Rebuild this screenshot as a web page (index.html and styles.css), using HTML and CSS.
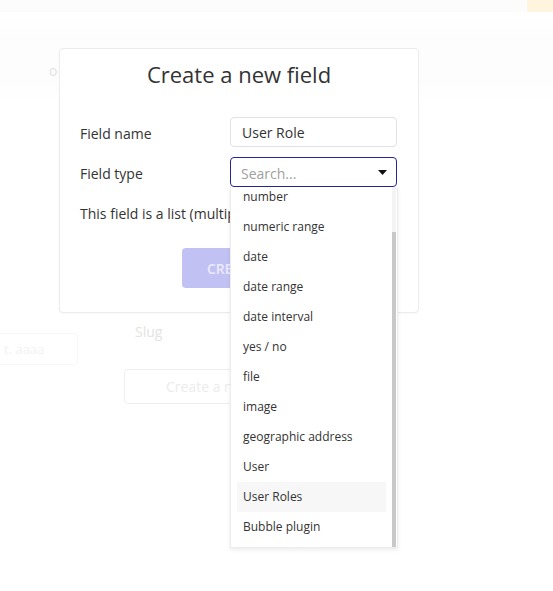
FILE: index.html
```html
<!DOCTYPE html>
<html>
<head>
<meta charset="utf-8">
<link rel="stylesheet" href="styles.css">
</head>
<body>
<div class="page">
  <div class="topbar"><span class="chip"></span></div>
  <div class="bg-head"><span class="bg-o">o</span></div>
  <div class="bg-body">
    <div class="bg-left">
      <div class="bg-box">t. aaaa</div>
    </div>
    <div class="bg-main">
      <div class="bg-slug">Slug</div>
      <div class="bg-btn">Create a new field</div>
    </div>
  </div>
</div>

<div class="modal">
  <h1 class="title">Create a new field</h1>
  <div class="form">
    <label class="lbl">Field name</label>
    <div class="input">User Role</div>
    <label class="lbl">Field type</label>
    <div class="select">
      <span class="placeholder">Search...</span>
      <svg class="caret" width="9" height="5" viewBox="0 0 9 5"><path d="M0 0h9L4.5 5z" fill="#111"/></svg>
    </div>
    <label class="lbl list-lbl">This field is a list (multiple entries)</label>
    <div class="check"></div>
  </div>
  <div class="actions"><button class="create">CREATE</button></div>
</div>

<div class="dropdown">
  <ul class="options">
    <li>number</li>
    <li>numeric range</li>
    <li>date</li>
    <li>date range</li>
    <li>date interval</li>
    <li>yes / no</li>
    <li>file</li>
    <li>image</li>
    <li>geographic address</li>
    <li>User</li>
    <li class="hover">User Roles</li>
    <li>Bubble plugin</li>
  </ul>
  <div class="scroll"><div class="thumb"></div></div>
</div>
</body>
</html>
```
FILE: styles.css
```css
* { box-sizing: border-box; }
html, body { margin: 0; padding: 0; background: #fff; }
body {
  font-family: "Open Sans", "Liberation Sans", sans-serif;
  color: #333;
  width: 553px;
  height: 591px;
  overflow: hidden;
  position: relative;
}

/* faded page behind the modal */
.page { width: 553px; height: 591px; }
.topbar {
  height: 12px;
  background: #fcfcfc;
  display: flex;
  justify-content: flex-end;
}
.chip { width: 26px; height: 12px; background: #fff5df; }
.bg-head {
  height: 88px;
  padding: 47px 0 0 49px;
  background: linear-gradient(#fff, #fdfdfd 30%, #fdfdfd 80%, #fff);
}
.bg-o { font-size: 14px; color: #e4e4e4; }
.bg-body { display: flex; padding-top: 222px; }
.bg-left { width: 124px; padding-top: 11px; }
.bg-box {
  width: 78px;
  height: 32px;
  border: 1px solid #f7f7f7;
  border-left: 0;
  border-radius: 0 4px 4px 0;
  font-size: 13px;
  color: #f2f2f2;
  padding: 6px 0 0 4px;
  white-space: nowrap;
  overflow: hidden;
}
.bg-slug { font-size: 14px; color: #e3e3e3; padding-left: 11px; line-height: 20px; }
.bg-btn {
  margin-top: 27px;
  width: 170px;
  height: 35px;
  border: 1px solid #eee;
  border-radius: 4px;
  font-size: 14px;
  color: #ececec;
  padding: 7px 0 0 41px;
  white-space: nowrap;
}

/* modal */
.modal {
  position: absolute;
  left: 59px;
  top: 48px;
  width: 360px;
  height: 265px;
  background: #fff;
  border: 1px solid #ececec;
  border-radius: 4px;
  box-shadow: 0 1px 3px rgba(0,0,0,0.03);
  padding: 10px 20px 0 20px;
}
.title {
  margin: 0;
  font-size: 22px;
  font-weight: 400;
  line-height: 30px;
  text-align: center;
  color: #333;
}
.form {
  margin-top: 28px;
  display: grid;
  grid-template-columns: 150px 167px;
  row-gap: 10px;
  align-items: center;
}
.lbl {
  font-size: 14px;
  color: #333;
  line-height: 26px;
  padding-top: 4px;
  white-space: nowrap;
}
.check { height: 30px; }
.input {
  height: 30px;
  border: 1px solid #e2e2e2;
  border-radius: 4px;
  padding: 0 11px;
  font-size: 14px;
  line-height: 30px;
  color: #333;
}
.select {
  height: 30px;
  border: 1px solid #272690;
  border-radius: 4px;
  padding: 0 9px 0 10px;
  display: flex;
  align-items: center;
  justify-content: space-between;
}
.placeholder { font-size: 14px; color: #a0a0a0; padding-top: 2px; }
.caret { display: block; margin-top: 1px; }
.actions { display: flex; padding-left: 102px; margin-top: 21px; }
.create {
  width: 113px;
  height: 40px;
  border: 0;
  border-radius: 4px;
  background: #c2c1f3;
  color: #ebebfb;
  font-family: "Open Sans", "Liberation Sans", sans-serif;
  font-size: 14px;
  font-weight: 600;
  text-align: left;
  padding: 0 0 0 25px;
}

/* dropdown menu */
.dropdown {
  position: absolute;
  left: 230px;
  top: 187px;
  width: 168px;
  height: 361px;
  background: #fff;
  border: 1px solid #ececec;
  border-top: 0;
  box-shadow: 0 2px 4px rgba(0,0,0,0.08);
  display: flex;
  overflow: hidden;
}
.options {
  list-style: none;
  margin: -5px 0 0 0;
  padding: 0 0 0 6px;
  flex: 1;
}
.options li {
  height: 30px;
  line-height: 30px;
  padding-left: 6px;
  font-size: 12px;
  color: #333;
  width: 149px;
  white-space: nowrap;
}
.options li.hover { background: #f7f7f7; }
.scroll {
  width: 4px;
  margin-right: 1px;
  background: #f4f4f4;
  display: flex;
  flex-direction: column;
}
.thumb { margin-top: 45px; flex: 1; background: #c9c9c9; }
```
